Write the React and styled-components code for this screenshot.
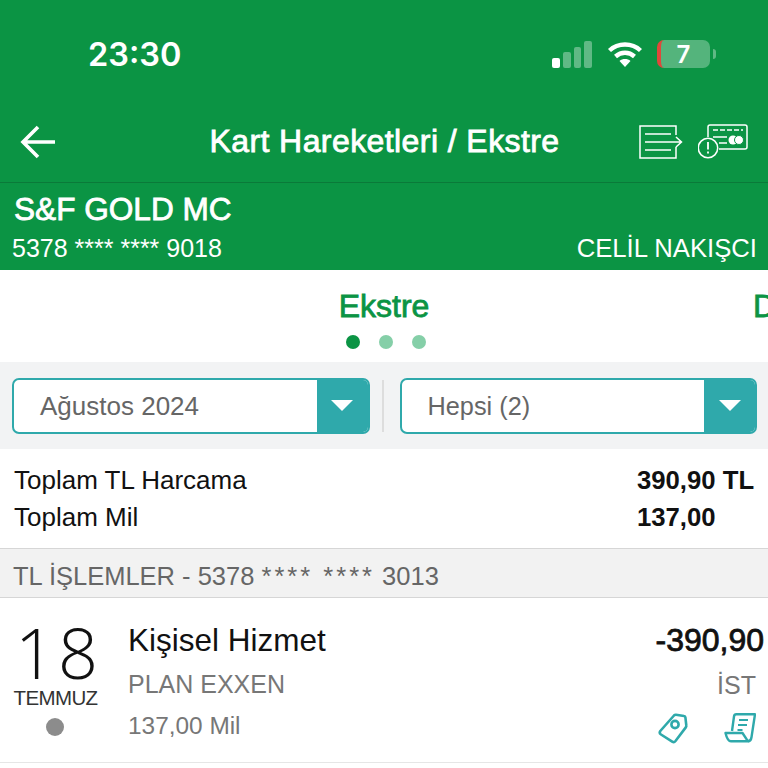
import React from "react";
import styled, { createGlobalStyle, css } from "styled-components";

const GlobalStyle = createGlobalStyle`
  html, body {
    margin: 0;
    padding: 0;
    background: #ffffff;
  }
  * {
    box-sizing: border-box;
  }
`;

const GREEN = "#0b9444";
const TEAL = "#2fa9ab";

// the reference uses a medium weight, Liberation only has regular and bold
const medium = css`
  font-weight: 400;
  -webkit-text-stroke: 0.8px currentColor;
`;

const Screen = styled.div`
  width: 768px;
  height: 768px;
  overflow: hidden;
  display: flex;
  flex-direction: column;
  font-family: "Liberation Sans", Arial, sans-serif;
  background: #ffffff;
`;
const StatusBar = styled.div`
  height: 108px;
  flex: none;
  background: ${GREEN};
  display: flex;
  align-items: center;
  padding: 0 58px 0 88px;
  color: #ffffff;
`;
const Clock = styled.div`
  font-family: Inter, sans-serif;
  font-size: 32.5px;
  font-weight: 600;
  margin-right: auto;
`;
const StatusIcons = styled.div`
  display: flex;
  align-items: center;
  gap: 14px;
`;
const Battery = styled.div`
  width: 53px;
  height: 28px;
  border-radius: 7px;
  background: rgba(255, 255, 255, 0.3);
  border-left: 4px solid #e0473a;
  position: relative;
  display: flex;
  align-items: center;
  justify-content: center;
  font-family: Inter, sans-serif;
  font-size: 24px;
  font-weight: 600;
  padding-right: 4px;
  &::after {
    content: "";
    position: absolute;
    right: -6px;
    top: 9px;
    width: 3px;
    height: 10px;
    border-radius: 0 3px 3px 0;
    background: rgba(255, 255, 255, 0.35);
  }
`;
const NavBar = styled.div`
  height: 75px;
  flex: none;
  background: ${GREEN};
  border-bottom: 1px solid #0a7a39;
  display: flex;
  align-items: center;
  justify-content: space-between;
  padding: 0 20px 7px 20px;
  position: relative;
`;
const NavTitle = styled.div`
  position: absolute;
  left: 0;
  right: 0;
  top: 15px;
  padding-left: 1px;
  text-align: center;
  color: #ffffff;
  font-size: 32px;
  letter-spacing: 0.42px;
  ${medium}
`;
const NavActions = styled.div`
  display: flex;
  align-items: center;
  gap: 15px;
`;
const CardPanel = styled.div`
  height: 87px;
  flex: none;
  background: ${GREEN};
  color: #ffffff;
  padding: 8px 11px 0 12px;
`;
const CardName = styled.div`
  font-size: 31.6px;
  line-height: 36px;
  padding-left: 2px;
  ${medium}
`;
const CardRow = styled.div`
  display: flex;
  justify-content: space-between;
  font-size: 25px;
  line-height: 30px;
  margin-top: 6px;
`;
const CardHolder = styled.span`
  font-size: 25.7px;
`;
const Tabs = styled.div`
  height: 92px;
  flex: none;
  position: relative;
  padding-top: 18px;
  text-align: center;
`;
const TabLabel = styled.div`
  color: ${GREEN};
  font-size: 32px;
  line-height: 36px;
  ${medium}
`;
const NextTab = styled(TabLabel)`
  position: absolute;
  left: 753px;
  top: 18px;
`;
const Dots = styled.div`
  display: flex;
  justify-content: center;
  gap: 19px;
  margin-top: 11px;
  padding-left: 4px;
`;
const Dot = styled.span`
  width: 14px;
  height: 14px;
  border-radius: 50%;
  background: ${(props) => (props.$active ? GREEN : "#85cfa8")};
`;
const FilterBar = styled.div`
  height: 87px;
  flex: none;
  background: #f2f3f4;
  display: flex;
  align-items: center;
  padding: 0 11px 0 12px;
`;
const Select = styled.div`
  flex: 1;
  height: 56px;
  background: #ffffff;
  border: 2px solid ${TEAL};
  border-radius: 7px;
  display: flex;
  align-items: center;
  overflow: hidden;
`;
const SelectText = styled.div`
  flex: 1;
  padding: 2px 0 0 26px;
  color: #666666;
  font-size: ${(props) => props.$size};
`;
const SelectArrow = styled.div`
  width: 51px;
  height: 100%;
  background: ${TEAL};
  display: flex;
  align-items: center;
  justify-content: center;
  &::after {
    content: "";
    border-left: 11px solid transparent;
    border-right: 11px solid transparent;
    border-top: 11px solid #ffffff;
  }
`;
const FilterDivider = styled.div`
  width: 2px;
  height: 52px;
  background: #dddddd;
  margin: 0 16px 0 12px;
`;
const Totals = styled.div`
  height: 99px;
  flex: none;
  padding: 13px 14px 0 14px;
`;
const TotalRow = styled.div`
  display: grid;
  grid-template-columns: 1fr 117px;
  height: 37px;
  align-items: center;
  font-size: 26px;
  color: #111111;
`;
const TotalValue = styled.div`
  font-size: 25.7px;
  font-weight: 700;
  white-space: nowrap;
`;
const SectionHeader = styled.div`
  height: 50px;
  flex: none;
  background: #f2f2f2;
  border-top: 1px solid #d6d6d6;
  border-bottom: 1px solid #d6d6d6;
  padding: 11px 0 0 13px;
  line-height: 32px;
  color: #666666;
  font-size: 25.5px;
`;
const Stars = styled.span`
  letter-spacing: 3px;
`;
const Row = styled.div`
  height: 165px;
  flex: none;
  border-bottom: 1px solid #e6e6e6;
  display: flex;
  padding: 20px 4px 0 14px;
`;
const DateCol = styled.div`
  width: 83px;
  margin-right: 31px;
  display: flex;
  flex-direction: column;
  align-items: center;
`;
const DateDay = styled.div`
  font-family: "Open Sans", sans-serif;
  font-weight: 300;
  font-size: 70px;
  line-height: 68px;
  letter-spacing: 3px;
  padding-left: 5px;
  color: #111111;
  white-space: nowrap;
`;
const DateMonth = styled.div`
  font-size: 20.5px;
  line-height: 24px;
  color: #333333;
  letter-spacing: -0.6px;
  white-space: nowrap;
`;
const DateDot = styled.div`
  width: 18px;
  height: 18px;
  border-radius: 50%;
  background: #8c8c8c;
  margin: 8px 2px 0 0;
`;
const InfoCol = styled.div`
  flex: 1;
  display: flex;
  flex-direction: column;
`;
const InfoTitle = styled.div`
  font-size: 31.5px;
  line-height: 45px;
  color: #111111;
`;
const InfoLine = styled.div`
  font-size: ${(props) => props.$size};
  line-height: 42px;
  color: #777777;
`;
const AmountCol = styled.div`
  display: flex;
  flex-direction: column;
  align-items: flex-end;
`;
const Amount = styled.div`
  font-size: 32px;
  line-height: 44px;
  color: #111111;
  ${medium}
`;
const City = styled.div`
  font-size: 25px;
  line-height: 46px;
  color: #777777;
  padding-right: 8px;
`;
const RowIcons = styled.div`
  display: flex;
  align-items: flex-start;
  gap: 36px;
  padding-right: 8px;
  margin-top: 5px;
`;

const SignalIcon = () => (
  <svg width="42" height="28" viewBox="0 0 42 28">
    <rect x="1" y="18" width="8" height="10" rx="2" fill="#fff" />
    <rect x="12" y="12" width="8" height="16" rx="2" fill="#fff" fillOpacity=".35" />
    <rect x="23" y="7" width="7" height="21" rx="2" fill="#fff" fillOpacity=".35" />
    <rect x="33" y="1" width="8" height="27" rx="2" fill="#fff" fillOpacity=".35" />
  </svg>
);

const WifiIcon = () => (
  <svg width="36" height="28" viewBox="0 0 36 28" fill="none" stroke="#fff" strokeWidth="4.4">
    <path d="M2.5 10.5C11 2.5 25 2.5 33.5 10.5" />
    <path d="M8.500 16.500C14 11.500 22 11.500 27.500 16.500" />
    <path d="M18 27l-5.500-6c3-2.600 8-2.600 11 0z" fill="#fff" stroke="none" />
  </svg>
);

const BackIcon = () => (
  <svg width="36" height="34" viewBox="0 0 36 34" fill="none" stroke="#fff" strokeWidth="3.6">
    <path d="M35 17H3M18 2L3 17l15 15" />
  </svg>
);

const StatementIcon = () => (
  <svg width="44" height="34" viewBox="0 0 44 34" fill="none" stroke="#fff" strokeWidth="1.500">
    <path d="M37 10V1H1v32h36v-11" />
    <path d="M6 9h26M6 17h36M6 25h26M37 12l5.500 5-5.500 5" />
  </svg>
);

const CardAlertIcon = () => (
  <svg width="50" height="35" viewBox="0 0 50 35" fill="none" stroke="#fff" strokeWidth="1.500">
    <path d="M10 13V3a2 2 0 0 1 2-2h35a2 2 0 0 1 2 2v20a2 2 0 0 1-2 2H21" />
    <path d="M15 6h30" strokeDasharray="5 2" />
    <path d="M15 13h14M21 19h8" />
    <circle cx="35" cy="16" r="4.500" fill="#fff" stroke="none" />
    <circle cx="41" cy="16" r="4.500" fill="#fff" stroke={GREEN} strokeWidth="1" />
    <circle cx="10" cy="24" r="9.700" />
    <path d="M10 18v7.500M10 27.500v2" strokeWidth="1.800" />
  </svg>
);

const TagIcon = () => (
  <svg width="30" height="32" viewBox="0 0 30 32" fill="none" stroke={TEAL} strokeWidth="2.600" strokeLinejoin="round">
    <path d="M16 2.500c.6-.6 1.300-.8 2-.7l8 1.200c.8.100 1.300.7 1.400 1.400l.9 8c.1.700-.1 1.400-.5 2L17.500 28c-.8 1-2.200 1.300-3.300.6L3 21.500c-1.200-.8-1.500-2.300-.7-3.500z" />
    <circle cx="17" cy="11.500" r="3.600" />
  </svg>
);

const ReceiptIcon = () => (
  <svg width="32" height="30" viewBox="0 0 32 30" fill="none" stroke={TEAL} strokeWidth="2.400" strokeLinejoin="round">
    <path d="M8 18L10 3.500c.2-1.300 1-2.200 2.300-2.200H31l-3.500 23c-.3 2-1.500 4-3.500 4" />
    <path d="M1.500 20h17l5.500 8.300H7c-2.500 0-4.500-4-5.500-8.300z" />
    <path d="M15 7h9M14 12h9M13.500 17h5" strokeWidth="1.800" />
  </svg>
);

export default function App() {
  return (
    <Screen>
      <GlobalStyle />
      <StatusBar>
        <Clock>23:30</Clock>
        <StatusIcons>
          <SignalIcon />
          <WifiIcon />
          <Battery>7</Battery>
        </StatusIcons>
      </StatusBar>
      <NavBar>
        <BackIcon />
        <NavTitle>Kart Hareketleri / Ekstre</NavTitle>
        <NavActions>
          <StatementIcon />
          <CardAlertIcon />
        </NavActions>
      </NavBar>
      <CardPanel>
        <CardName>S&amp;F GOLD MC</CardName>
        <CardRow>
          <span>5378 **** **** 9018</span>
          <CardHolder>CELİL NAKIŞCI</CardHolder>
        </CardRow>
      </CardPanel>
      <Tabs>
        <TabLabel>Ekstre</TabLabel>
        <NextTab>D</NextTab>
        <Dots>
          <Dot $active />
          <Dot />
          <Dot />
        </Dots>
      </Tabs>
      <FilterBar>
        <Select>
          <SelectText $size="26px">Ağustos 2024</SelectText>
          <SelectArrow />
        </Select>
        <FilterDivider />
        <Select>
          <SelectText $size="25.3px">Hepsi (2)</SelectText>
          <SelectArrow />
        </Select>
      </FilterBar>
      <Totals>
        <TotalRow>
          <span>Toplam TL Harcama</span>
          <TotalValue>390,90 TL</TotalValue>
        </TotalRow>
        <TotalRow>
          <span>Toplam Mil</span>
          <TotalValue>137,00</TotalValue>
        </TotalRow>
      </Totals>
      <SectionHeader>
        TL İŞLEMLER - 5378 <Stars>**** ****</Stars> 3013
      </SectionHeader>
      <Row>
        <DateCol>
          <DateDay>18</DateDay>
          <DateMonth>TEMMUZ</DateMonth>
          <DateDot />
        </DateCol>
        <InfoCol>
          <InfoTitle>Kişisel Hizmet</InfoTitle>
          <InfoLine $size="25px">PLAN EXXEN</InfoLine>
          <InfoLine $size="24.4px">137,00 Mil</InfoLine>
        </InfoCol>
        <AmountCol>
          <Amount>-390,90</Amount>
          <City>İST</City>
          <RowIcons>
            <TagIcon />
            <ReceiptIcon />
          </RowIcons>
        </AmountCol>
      </Row>
    </Screen>
  );
}
